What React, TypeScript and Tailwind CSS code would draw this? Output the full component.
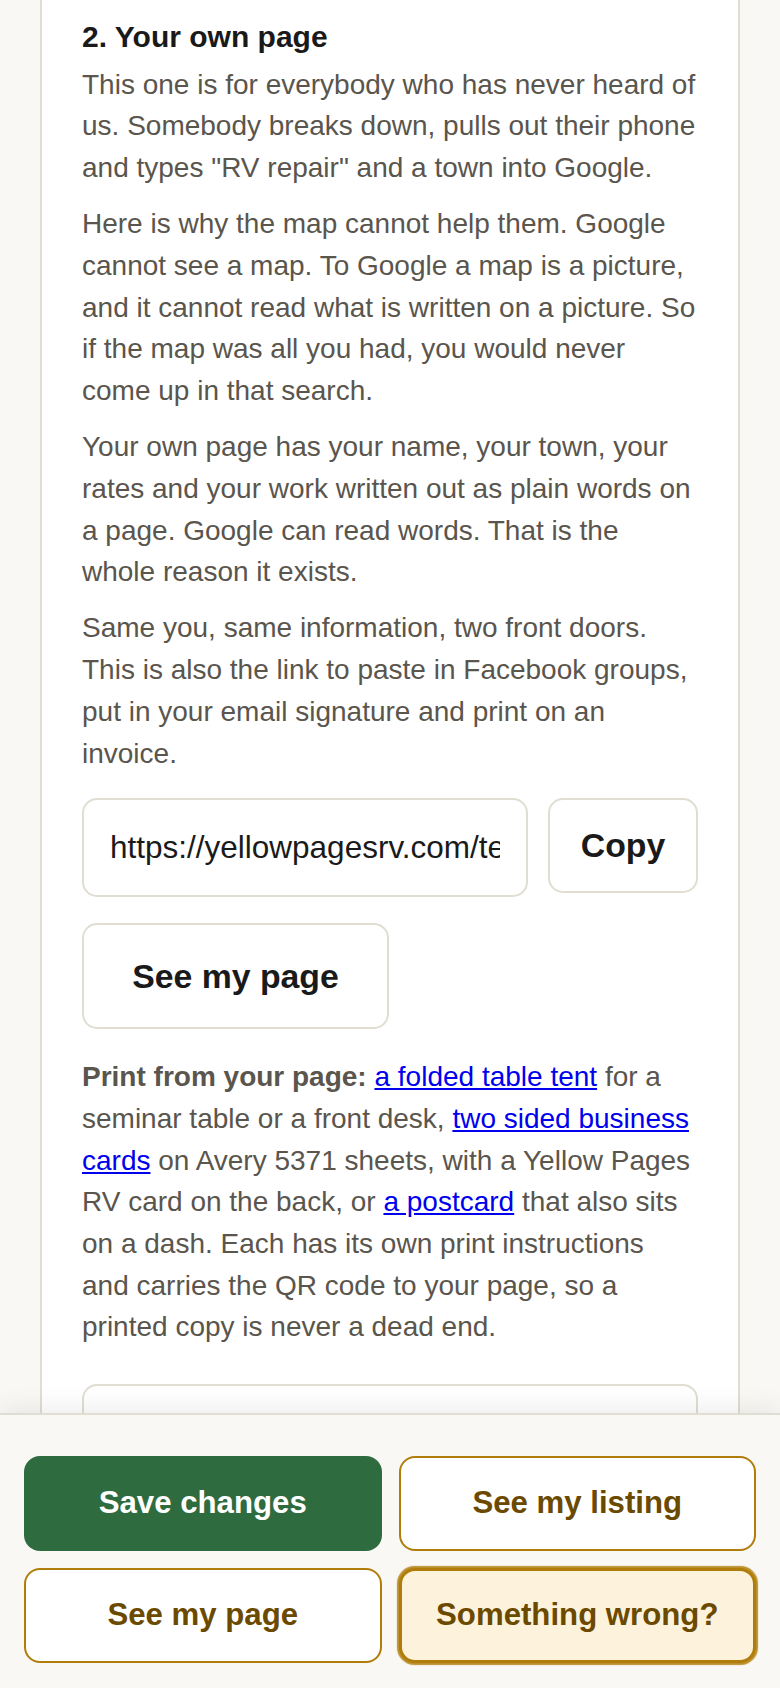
import React from "react";

const bodyP = "text-[28px] leading-[41.7px] text-[#5a554d]";

export default function App() {
  return (
    <div className="h-[1688px] flex flex-col bg-[#f9f8f4] overflow-hidden [font-family:'Liberation_Sans',Arial,sans-serif]">
      <div className="flex-1 min-h-0 overflow-hidden px-[40px]">
        <div className="bg-white border-x-2 border-[#e0ddd2] px-[40px] pt-[18px] pb-[40px]">
          <h2 className="text-[30px] leading-[37.5px] font-bold text-[#1a1a1a]">2. Your own page</h2>
          <p className={`mt-[8px] ${bodyP}`}>
            This one is for everybody who has never heard of us. Somebody breaks down, pulls out their phone and types "RV repair" and a town into Google.
          </p>
          <p className={`mt-[14.5px] ${bodyP}`}>
            Here is why the map cannot help them. Google cannot see a map. To Google a map is a picture, and it cannot read what is written on a picture. So if the map was all you had, you would never come up in that search.
          </p>
          <p className={`mt-[14.5px] ${bodyP}`}>
            Your own page has your name, your town, your rates and your work written out as plain words on a page. Google can read words. That is the whole reason it exists.
          </p>
          <p className={`mt-[14.5px] ${bodyP}`}>
            Same you, same information, two front doors. This is also the link to paste in Facebook groups, put in your email signature and print on an invoice.
          </p>
          <div className="mt-[24px] flex items-start gap-[20px]">
            <input
              readOnly
              value="https://yellowpagesrv.com/tech/your-page"
              className="h-[99px] flex-1 min-w-0 rounded-[15px] border-2 border-[#e0ddd2] bg-white px-[26px] text-[31.5px] text-[#1a1a1a] outline-none"
            />
            <button className="w-[150px] h-[95px] shrink-0 rounded-[15px] border-2 border-[#e0ddd2] bg-white text-[33.8px] font-bold text-[#1a1a1a]">
              Copy
            </button>
          </div>
          <button className="mt-[26px] block w-[307px] h-[106px] rounded-[15px] border-2 border-[#e0ddd2] bg-white text-[33.8px] font-bold text-[#1a1a1a]">
            See my page
          </button>
          <p className={`mt-[27px] ${bodyP}`}>
            <strong className="font-bold">Print from your page:</strong>{" "}
            <a href="#" className="text-[#0000ee] underline">a folded table tent</a> for a seminar table or a front desk,{" "}
            <a href="#" className="text-[#0000ee] underline">two sided business cards</a> on Avery 5371 sheets, with a Yellow Pages RV card on the back, or{" "}
            <a href="#" className="text-[#0000ee] underline">a postcard</a> that also sits on a dash. Each has its own print instructions and carries the QR code to your page, so a printed copy is never a dead end.
          </p>
          <div className="mt-[36px] h-[200px] rounded-[15px] border-2 border-[#e0ddd2] bg-white" />
        </div>
      </div>
      <div className="shrink-0 relative z-10 border-t-2 border-[#e0ddd2] bg-[#f9f8f4] px-[24px] pt-[41px] pb-[25px] grid grid-cols-2 gap-x-[17px] gap-y-[16.5px] shadow-[0_-6px_24px_rgba(0,0,0,0.07)]">
        <button className="h-[95.5px] rounded-[16px] bg-[#2e6b3f] text-[31.2px] font-bold text-white">
          Save changes
        </button>
        <button className="h-[95.5px] rounded-[16px] border-2 border-[#b07d0a] bg-white text-[31.2px] font-bold text-[#6b4a00]">
          See my listing
        </button>
        <button className="h-[95.5px] rounded-[16px] border-2 border-[#b07d0a] bg-white text-[31.2px] font-bold text-[#6b4a00]">
          See my page
        </button>
        <button className="h-[95.5px] rounded-[16px] border-[3px] border-[#b07d0a] bg-[#fdf3dc] text-[31.2px] font-bold text-[#6b4a00] shadow-[0_0_1px_1.5px_rgba(176,125,10,0.85)]">
          Something wrong?
        </button>
      </div>
    </div>
  );
}
